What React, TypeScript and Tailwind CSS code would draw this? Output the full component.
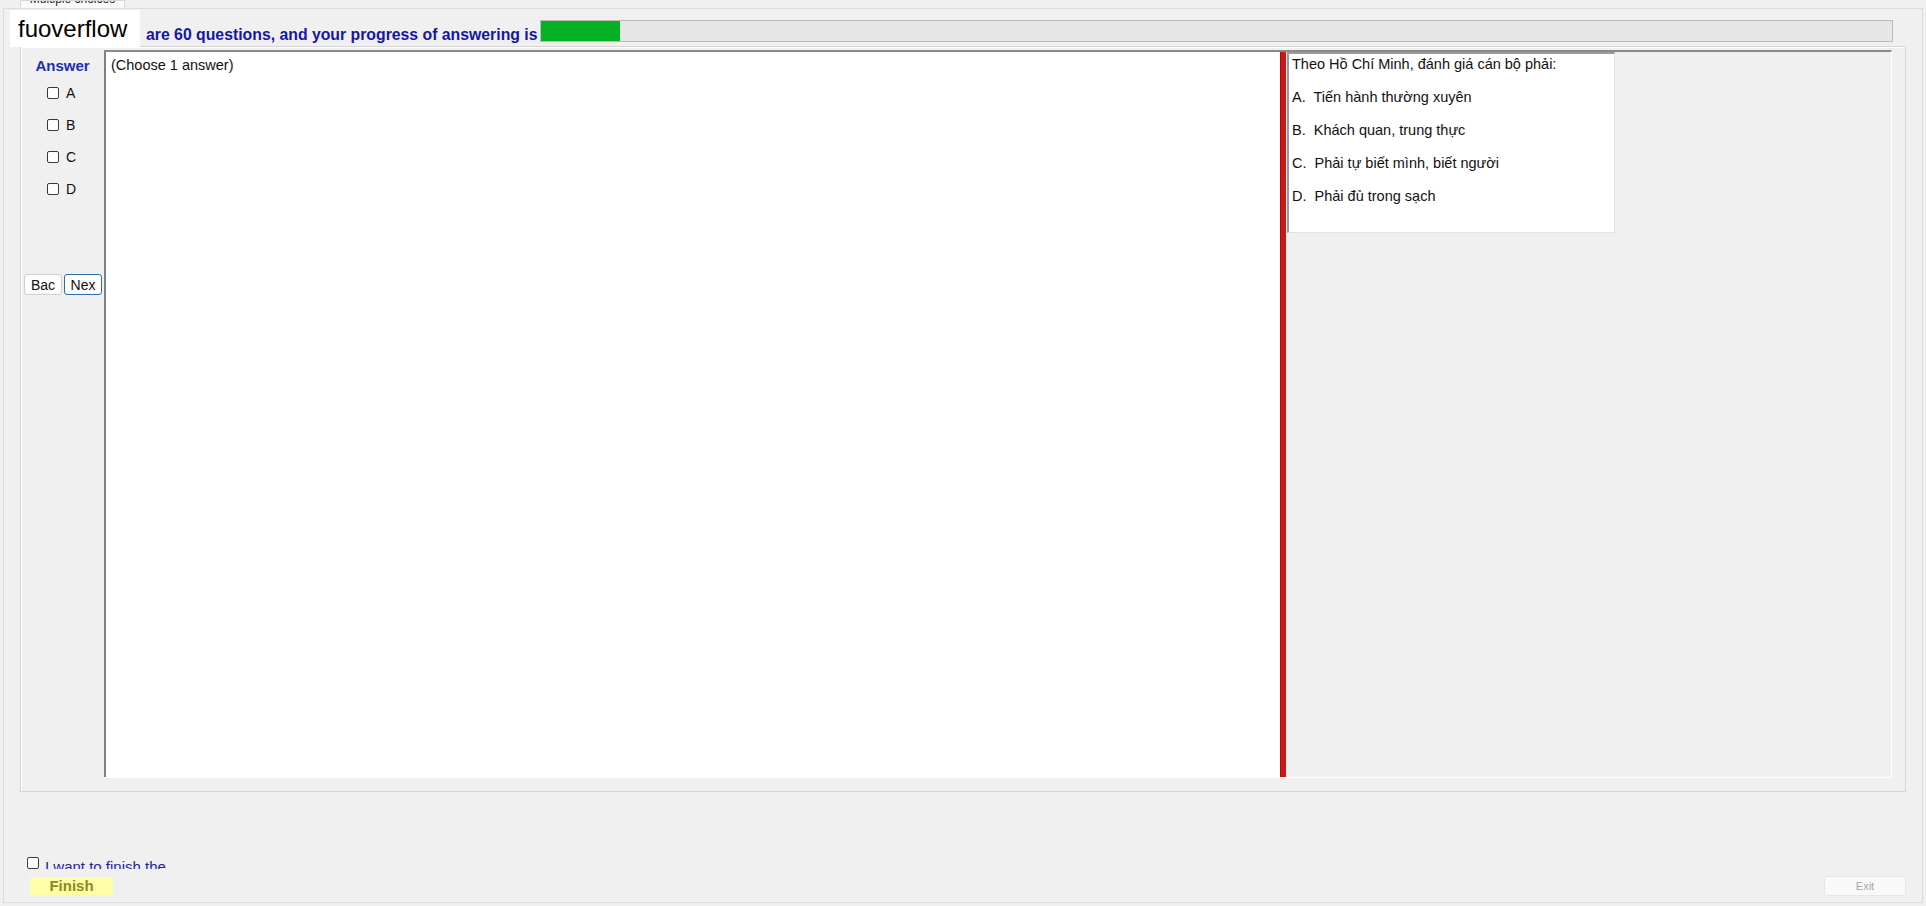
import React from "react";

// Small Windows-style checkbox box
function Box() {
  return (
    <span className="inline-block w-[12px] h-[12px] border border-[#3a3a3a] rounded-[2px] bg-white shrink-0" />
  );
}

const choices = ["A", "B", "C", "D"];

const questionLines = [
  "A.  Tiến hành thường xuyên",
  "B.  Khách quan, trung thực",
  "C.  Phải tự biết mình, biết người",
  "D.  Phải đủ trong sạch",
];

export default function App() {
  return (
    <div className="w-[1926px] h-[906px] bg-[#f0f0f0] overflow-hidden font-['Liberation_Sans',Arial,sans-serif] text-black">
      {/* tab strip */}
      <div className="h-[8px] flex pl-[20px]">
        <div className="w-[105px] h-[8px] bg-[#f9f9f9] border border-b-0 border-[#d9d9d9] overflow-hidden flex justify-center">
          <span className="text-[12px] leading-[14px] -mt-[9px] text-[#222] whitespace-nowrap">Multiple choices</span>
        </div>
      </div>

      {/* tab page */}
      <div className="ml-[3px] w-[1920px] h-[895px] border border-[#dcdcdc] bg-[#f0f0f0] flex flex-col">
        {/* header row */}
        <div className="mt-[1px] h-[36px] flex">
          <div className="ml-[6px] w-[130px] h-[37px] bg-white flex items-center pl-[8px] text-[24px] leading-[28px] relative z-10">
            fuoverflow
          </div>
          <div className="ml-[6px] self-start mt-[16px] text-[15.8px] leading-[18px] font-bold text-[#1616a6] whitespace-nowrap">
            are 60 questions, and your progress of answering is
          </div>
          <div className="ml-auto mr-[29px] mt-[10px] w-[1353px] h-[22px] shrink-0 bg-[#e6e6e6] border border-[#bcbcbc] flex">
            <div className="w-[79px] h-full bg-[#06b025]" />
          </div>
        </div>

        {/* question group */}
        <div className="ml-[16px] w-[1886px] h-[746px] border border-[#d6d6d6] shadow-[inset_1px_1px_0_#ffffff] pt-[3px] flex">
          {/* answer column */}
          <div className="w-[83px] flex flex-col">
            <div className="mt-[7px] text-center text-[15px] leading-[18px] font-bold text-[#1a2fb0]">Answer</div>
            <div className="mt-[2px] flex flex-col">
              {choices.map((c) => (
                <div key={c} className="h-[32px] flex items-center pl-[26px] gap-[7px]">
                  <Box />
                  <span className="text-[14px] leading-[16px] text-[#111]">{c}</span>
                </div>
              ))}
            </div>
            <div className="mt-[69px] flex pl-[3px] gap-[2px]">
              <button className="w-[38px] h-[21px] bg-[#fdfdfd] border border-[#d0d0d0] rounded-[3px] text-[14px] leading-[16px] text-[#111]">
                Bac
              </button>
              <button className="w-[38px] h-[21px] bg-[#fdfdfd] border border-[#2f6ea5] rounded-[3px] text-[14px] leading-[16px] text-[#111]">
                Nex
              </button>
            </div>
          </div>

          {/* split content area */}
          <div className="w-[1788px] h-[728px] border-t-2 border-t-[#8a8a8a] border-r border-r-white border-b border-b-white flex">
            <div className="w-[1176px] h-full bg-white border-l-2 border-l-[#808080] pl-[5px] pt-[4px]">
              <div className="text-[14.5px] leading-[18px] text-[#111]">(Choose 1 answer)</div>
            </div>
            <div className="w-[6px] h-full bg-[#cf1515] border-l border-[#a80e0e]" />
            <div className="flex-1 h-full bg-[#f0f0f0] pl-[1px]">
              <div className="w-[328px] h-[181px] bg-white border-t-2 border-l-2 border-t-[#9a9a9a] border-l-[#9a9a9a] border-r border-b border-r-[#e3e3e3] border-b-[#e3e3e3] pl-[3px] pt-[1px]">
                <div className="text-[14.5px] leading-[18px] text-[#111] whitespace-nowrap">
                  Theo Hồ Chí Minh, đánh giá cán bộ phải:
                </div>
                {questionLines.map((l) => (
                  <div key={l} className="mt-[15px] text-[14.5px] leading-[18px] text-[#111] whitespace-pre">
                    {l}
                  </div>
                ))}
              </div>
            </div>
          </div>
        </div>

        {/* finish confirmation */}
        <div className="mt-[63px] h-[14px] overflow-hidden flex items-start pl-[23px] gap-[6px]">
          <span className="mt-[2px] inline-block w-[12px] h-[12px] border border-[#3a3a3a] rounded-[2px] bg-white shrink-0" />
          <span className="text-[15px] leading-[18px] pt-[3px] text-[#2323a3] whitespace-nowrap">I want to finish the</span>
        </div>

        <div className="mt-[7px] h-[20px] flex items-center justify-between pl-[26px] pr-[16px]">
          <div className="w-[83px] h-[18px] bg-[#ffffa8] flex items-center justify-center text-[15px] leading-[18px] font-bold text-[#8c8a1c]">
            Finish
          </div>
          <div className="w-[82px] h-[20px] bg-[#f9f9f9] border border-[#e6e6e6] rounded-[3px] flex items-center justify-center text-[11px] leading-[12px] text-[#a6a6a6]">
            Exit
          </div>
        </div>
      </div>
    </div>
  );
}
